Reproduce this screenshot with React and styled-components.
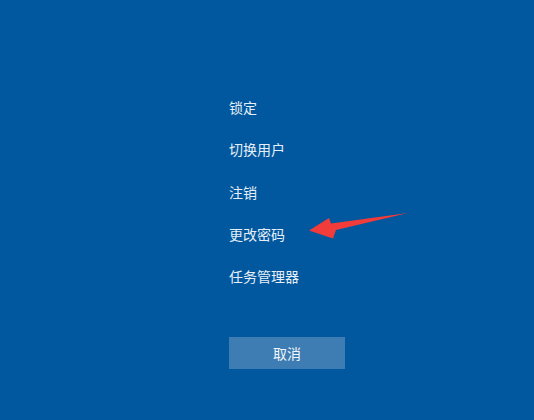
import React from "react";
import styled, { createGlobalStyle } from "styled-components";

const Global = createGlobalStyle`
  html, body { margin: 0; padding: 0; background: #01589e; }
  body { font-family: "Noto Sans CJK SC", "Noto Sans", sans-serif; }
`;

const Screen = styled.div`
  position: relative;
  width: 534px;
  height: 420px;
  background: #01589e;
  overflow: hidden;
  box-sizing: border-box;
  padding: 86px 0 0 229px;
  display: flex;
  flex-direction: column;
  align-items: flex-start;
`;

const Menu = styled.ul`
  list-style: none;
  margin: 0;
  padding: 0;
  display: flex;
  flex-direction: column;
`;

const Item = styled.li`
  height: 42.3px;
  display: flex;
  align-items: center;
  font-size: 14px;
  color: #e6eef6;
  cursor: pointer;
`;

const Button = styled.button`
  margin-top: 40px;
  width: 116px;
  height: 32px;
  border: none;
  background: #3d7db3;
  color: #f2f6fa;
  font-family: inherit;
  font-size: 14px;
  padding: 0;
`;

const Arrow = styled.svg`
  position: absolute;
  left: 0;
  top: 0;
  pointer-events: none;
`;

export default function App() {
  const items = ["锁定", "切换用户", "注销", "更改密码", "任务管理器"];
  return (
    <>
      <Global />
      <Screen>
        <Menu>
          {items.map((t) => (
            <Item key={t}>{t}</Item>
          ))}
        </Menu>
        <Button>取消</Button>
        <Arrow width="534" height="420" viewBox="0 0 534 420">
          <polygon
            points="309,230.5 329,218 331,223.5 408,213 336,230 333,238.5"
            fill="#f23b3b"
          />
        </Arrow>
      </Screen>
    </>
  );
}
